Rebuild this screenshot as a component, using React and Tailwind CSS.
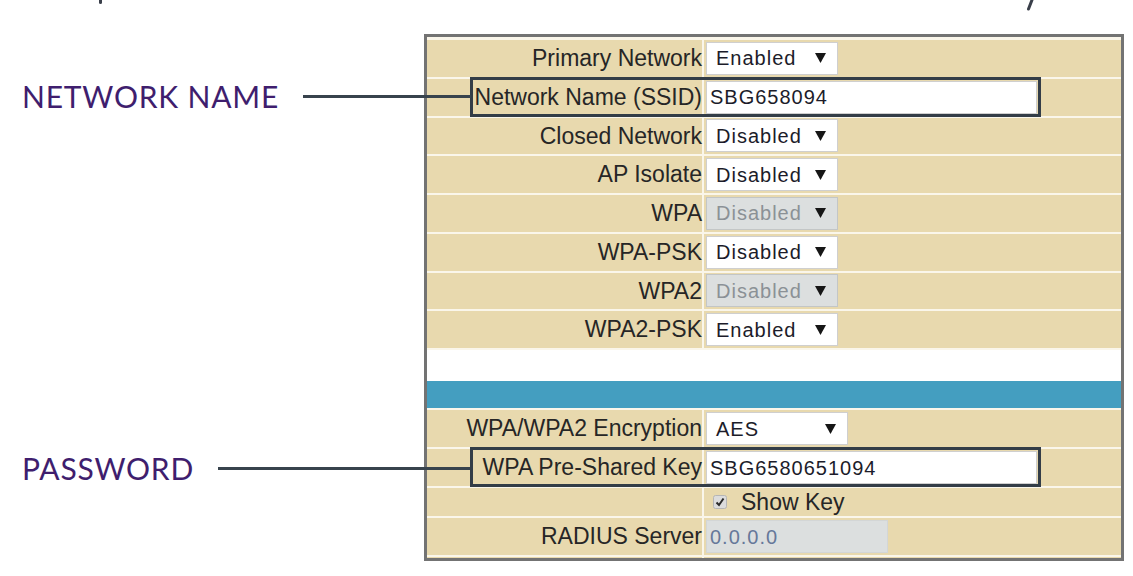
import React from "react";

const Caret = () => (
  <svg width="11" height="10" viewBox="0 0 11 10" className="shrink-0">
    <polygon points="0,0 11,0 5.5,10" fill="#161616" />
  </svg>
);

const Select = ({ value, disabled, wide }) => (
  <div
    className={`flex h-[33px] items-center justify-between border pl-[9px] pr-[11px] text-[20px] tracking-[1px] ${
      wide ? "w-[142px]" : "w-[132px]"
    } ${
      disabled
        ? "border-[#c3c6c6] bg-[#dcdfdf] text-[#8b9196]"
        : "border-[#cfcfcf] bg-white text-[#1c1c2a]"
    }`}
  >
    <span>{value}</span>
    <Caret />
  </div>
);

const TextInput = ({ value, gray, width = "w-[331px]" }) => (
  <div
    className={`flex h-[33px] items-center border pl-[3px] text-[20px] tracking-[1px] ${width} ${
      gray
        ? "border-[#d3d6d6] bg-[#dcdfdf] text-[#66789a]"
        : "border-[#cfcfcf] bg-white text-[#1c1c2a]"
    }`}
  >
    {value}
  </div>
);

// one beige line of the settings table
const Row = ({ label, children, height = "h-[36.75px]", highlight }) => (
  <div className={`relative flex ${height} box-content border-b-2 border-[#faf6ea]`}>
    <div className="flex w-[277px] shrink-0 items-center justify-end border-r-2 border-[#faf6ea] text-[23px] text-[#262626]">
      {label}
    </div>
    <div className="flex flex-1 items-center pl-[2px]">{children}</div>
    {highlight && (
      <div className="pointer-events-none absolute left-[43px] top-[-2px] h-[40px] w-[571px] border-[3px] border-[#333d47]" />
    )}
  </div>
);

const Callout = ({ text, top, lineWidth }) => (
  <div className={`absolute left-[22px] flex items-center ${top}`}>
    <span className="font-['Lato',sans-serif] text-[30px] leading-none tracking-[0.8px] text-[#3f1e6e]">
      {text}
    </span>
    <span className={`ml-[24px] block h-[3px] bg-[#38434d] ${lineWidth}`} />
  </div>
);

export default function App() {
  return (
    <div className="relative h-[576px] w-[1133px] overflow-hidden bg-white font-['Liberation_Sans',Arial,sans-serif]">
      {/* cut-off glyph tails from the line above */}
      <div className="flex h-[34px] items-start">
        <span className="ml-[99px] block h-[4px] w-[3px] rounded-b-full bg-[#3a3f4a]" />
        <svg width="8" height="11" viewBox="0 0 8 11" className="ml-[924px]">
          <path d="M6 0 L2.5 9" stroke="#3a3f4a" strokeWidth="3" strokeLinecap="round" />
        </svg>
      </div>

      {/* settings frame */}
      <div className="ml-[424px] h-[527px] w-[700px] overflow-hidden border-[3px] border-[#737373] bg-white">
        <div className="bg-[#e8d9ae]">
          <div className="h-[3px] bg-[#faf6ea]" />
          <Row label="Primary Network">
            <Select value="Enabled" />
          </Row>
          <Row label="Network Name (SSID)" highlight>
            <TextInput value="SBG658094" />
          </Row>
          <Row label="Closed Network">
            <Select value="Disabled" />
          </Row>
          <Row label="AP Isolate">
            <Select value="Disabled" />
          </Row>
          <Row label="WPA">
            <Select value="Disabled" disabled />
          </Row>
          <Row label="WPA-PSK">
            <Select value="Disabled" />
          </Row>
          <Row label="WPA2">
            <Select value="Disabled" disabled />
          </Row>
          <Row label="WPA2-PSK">
            <Select value="Enabled" />
          </Row>
        </div>

        <div className="h-[31px] bg-white" />
        <div className="h-[27px] bg-[#449ec0]" />

        <div className="border-t-2 border-[#faf6ea] bg-[#e8d9ae]">
          <Row label="WPA/WPA2 Encryption" height="h-[37px]">
            <Select value="AES" wide />
          </Row>
          <Row label="WPA Pre-Shared Key" height="h-[37px]" highlight>
            <TextInput value="SBG6580651094" />
          </Row>
          <Row label="" height="h-[28px]">
            <div className="ml-[7px] flex items-center gap-[14px]">
              <svg width="14" height="14" viewBox="0 0 14 14">
                <rect x="0.5" y="0.5" width="13" height="13" rx="2" fill="#dcdcdc" stroke="#b5b5b5" />
                <path d="M3.5 7.5 L6 10 L10.5 3.5" fill="none" stroke="#2b2b2b" strokeWidth="2" />
              </svg>
              <span className="text-[23px] text-[#262626]">Show Key</span>
            </div>
          </Row>
          <Row label="RADIUS Server" height="h-[37px]">
            <TextInput value="0.0.0.0" gray width="w-[182px]" />
          </Row>
          {/* next row only peeks in under the frame's lower edge */}
          <Row label="" height="h-[37px]">
            <TextInput value="" width="w-[93px]" gray />
          </Row>
        </div>
      </div>

      <Callout text="NETWORK NAME" top="top-[81px]" lineWidth="w-[168px]" />
      <Callout text="PASSWORD" top="top-[453px]" lineWidth="w-[252px]" />
    </div>
  );
}
